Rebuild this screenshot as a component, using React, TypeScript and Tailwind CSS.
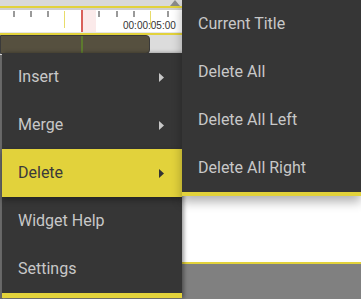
import React from 'react';

const menuItems = [
  { label: 'Insert', sub: true },
  { label: 'Merge', sub: true },
  { label: 'Delete', sub: true, active: true },
  { label: 'Widget Help' },
  { label: 'Settings' },
];

const subItems = ['Current Title', 'Delete All', 'Delete All Left', 'Delete All Right'];

const ticks = [13, 30, 47, 98, 116, 133, 167];
const majorTicks = [64, 150];

const Arrow = ({ dark }: { dark?: boolean }) => (
  <svg width="5" height="9" viewBox="0 0 5 9" className={dark ? 'fill-[#333]' : 'fill-[#c8c8c8]'}>
    <path d="M0 0 L5 4.5 L0 9 Z" />
  </svg>
);

export default function App() {
  return (
    <div className="relative flex flex-col w-[361px] h-[299px] overflow-hidden bg-white font-['Roboto',sans-serif]">
      {/* timeline ruler */}
      <div className="h-[6px] shrink-0 bg-[#d9d9d9] relative">
        <div className="absolute left-[170px] top-0 w-0 h-0 border-l-[5px] border-r-[5px] border-b-[6px] border-l-transparent border-r-transparent border-b-[#8a8a8a]" />
      </div>
      <div className="h-[2px] shrink-0 bg-[#e2d23b]" />
      <div className="h-[2px] shrink-0 bg-[#cfcfcf]" />
      <div className="relative h-[22px] shrink-0 bg-white">
        {ticks.map((x) => (
          <div key={x} className="absolute top-[1px] w-[2px] h-[6px] bg-[#9a9a9a]" style={{ left: x }} />
        ))}
        {majorTicks.map((x) => (
          <div key={x} className="absolute top-[1px] w-[1px] h-[17px] bg-[#e8dc6a]" style={{ left: x }} />
        ))}
        <div className="absolute left-[81px] top-0 w-[15px] h-[22px] bg-[#fbeaea]" />
        <div className="absolute left-[81px] top-0 w-[2px] h-[22px] bg-[#d9605a]" />
        <div className="absolute left-[123px] top-[10px] text-[10px] leading-[11px] text-[#333] font-['Liberation_Sans',sans-serif]">
          00:00:05:00
        </div>
      </div>
      <div className="h-[1px] shrink-0 bg-[#e6e6e6]" />
      <div className="h-[2px] shrink-0 bg-[#e2d23b]" />
      <div className="flex h-[20px] shrink-0 bg-[#dcdcdc]">
        <div className="relative w-[150px] h-[19px] rounded-r-[4px] bg-[#56503f] border border-[#3a3a3a]">
          <div className="absolute left-[80px] top-0 w-[2px] h-full bg-[#5d7a2e]" />
        </div>
      </div>
      {/* content below */}
      <div className="flex flex-1">
        <div className="w-[3px] bg-[#6b6b6b]" />
        <div className="flex-1 flex flex-col">
          <div className="flex-1 bg-white" />
          <div className="h-[2px] bg-[#e2d23b]" />
          <div className="h-[35px] bg-[#808080]" />
        </div>
      </div>

      {/* context menu */}
      <div className="absolute left-[2px] top-[53px] w-[180px] bg-[#363636] border-b-[5px] border-[#e2d23b] shadow-[2px_0_4px_rgba(0,0,0,0.4)]">
        {menuItems.map((item) => (
          <div
            key={item.label}
            className={`flex items-center justify-between h-[48px] pl-[16px] pr-[18px] text-[16px] ${
              item.active ? 'bg-[#e2d23b] text-[#3a3a3a] shadow-[0_3px_6px_rgba(0,0,0,0.35)] relative' : 'text-[#c8c8c8]'
            }`}
          >
            <span>{item.label}</span>
            {item.sub && <Arrow dark={item.active} />}
          </div>
        ))}
      </div>

      {/* submenu */}
      <div className="absolute left-[182px] top-0 w-[179px] bg-[#363636] border-b-[4px] border-[#e2d23b] shadow-[0_6px_10px_rgba(0,0,0,0.3)]">
        {subItems.map((s) => (
          <div key={s} className="flex items-center h-[48px] pl-[16px] text-[16px] text-[#c8c8c8]">
            {s}
          </div>
        ))}
      </div>
    </div>
  );
}
